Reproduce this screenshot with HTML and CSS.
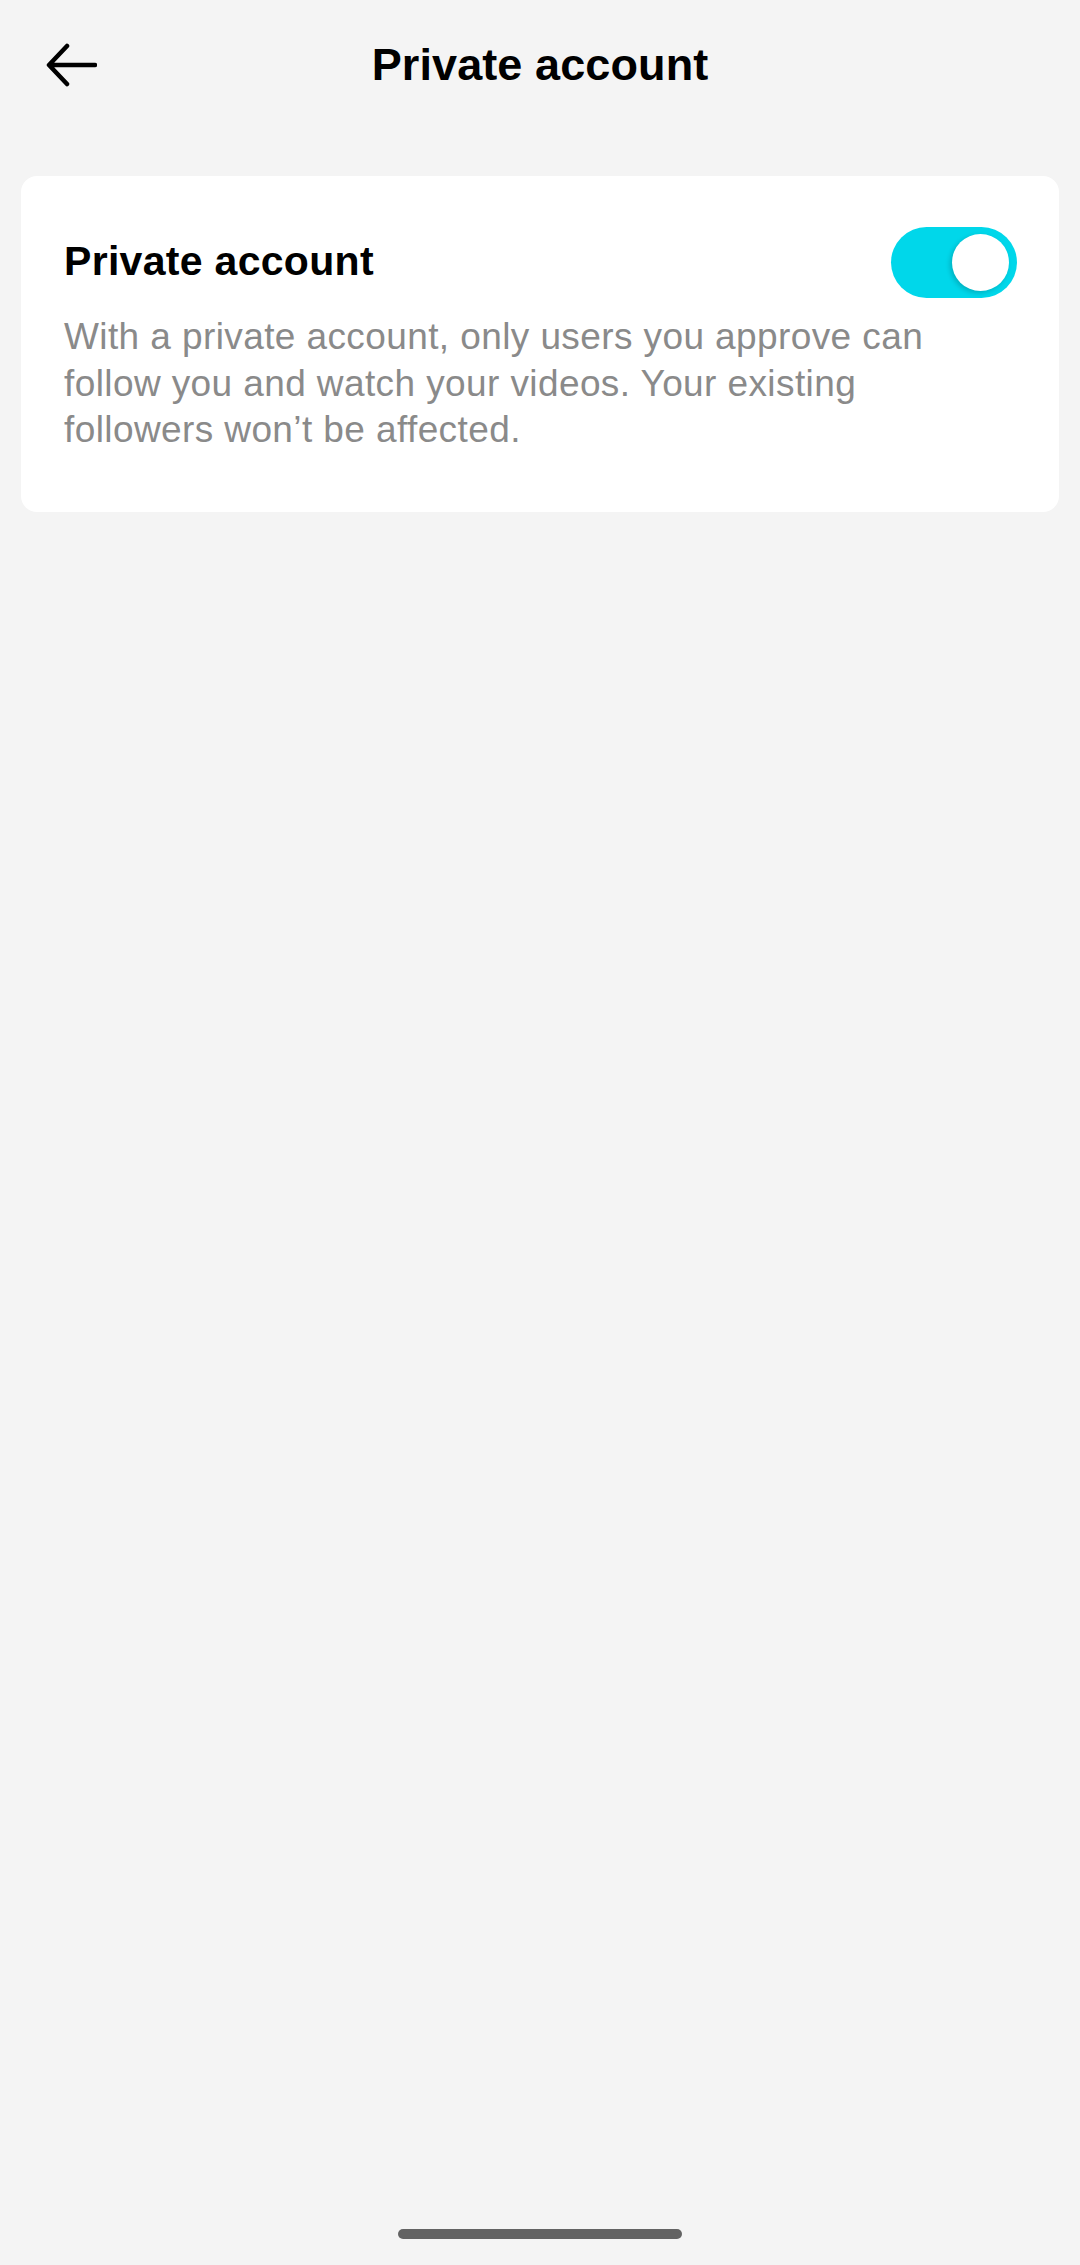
FILE: index.html
```html
<!DOCTYPE html>
<html lang="en">
    <head>
        <meta charset="UTF-8" />
        <meta name="viewport" content="width=device-width, initial-scale=1.0" />
        <title>Private account</title>
        <link rel="stylesheet" href="styles.css">
    </head>
    <body>
        <div class="page">
            <header class="nav">
                <button class="nav-back" aria-label="Back">
                    <svg width="52" height="44" viewBox="0 0 52 44" fill="none">
                        <path d="M50 22H5M22 3L4 22L22 41" stroke="#000" stroke-width="4.5" stroke-linecap="round" stroke-linejoin="round" />
                    </svg>
                </button>
                <h1 class="nav-title">Private account</h1>
                <span></span>
            </header>

            <section class="card">
                <div class="card-row">
                    <h2 class="card-title">Private account</h2>
                    <label class="switch">
                        <input type="checkbox" checked />
                        <span class="switch-track"><span class="switch-knob"></span></span>
                    </label>
                </div>
                <p class="card-desc">With a private account, only users you approve can follow you and watch your videos. Your existing followers won’t be affected.</p>
            </section>

            <div class="home-bar"></div>
        </div>
    </body>
</html>
```

FILE: styles.css
```css
html, body {
    margin: 0;
    padding: 0;
    background: #f4f4f4;
}
body {
    font-family: "Liberation Sans", Arial, sans-serif;
    color: #000;
}
.page {
    height: 2265px;
    display: flex;
    flex-direction: column;
}
.nav {
    height: 130px;
    display: grid;
    grid-template-columns: 1fr auto 1fr;
    align-items: center;
    padding: 0 45px;
}
.nav-back {
    justify-self: start;
    padding: 0;
    border: none;
    background: none;
    display: flex;
    cursor: pointer;
}
.nav-title {
    margin: 0;
    font-size: 45px;
    font-weight: 700;
    letter-spacing: 0.1px;
}
.card {
    margin: 46px 21px 0;
    padding: 51px 42px 58px 43px;
    background: #fff;
    border-radius: 16px;
}
.card-row {
    display: flex;
    align-items: center;
    justify-content: space-between;
}
.card-title {
    margin: -3px 0 0;
    font-size: 41px;
    font-weight: 700;
    letter-spacing: 0.3px;
}
.switch input {
    display: none;
}
.switch-track {
    display: flex;
    align-items: center;
    justify-content: flex-end;
    width: 126px;
    height: 71px;
    padding: 0 8px;
    box-sizing: border-box;
    border-radius: 36px;
    background: #00d7ea;
}
.switch-knob {
    width: 57px;
    height: 57px;
    border-radius: 50%;
    background: #fff;
    box-shadow: -2px 2px 5px rgba(0, 0, 0, 0.18);
}
.card-desc {
    max-width: 900px;
    margin: 16px 0 0;
    font-size: 37px;
    line-height: 46.7px;
    letter-spacing: 0.4px;
    color: #8a8a8a;
}
.home-bar {
    width: 284px;
    height: 10px;
    margin: auto auto 26px;
    border-radius: 5px;
    background: #636363;
}
```
